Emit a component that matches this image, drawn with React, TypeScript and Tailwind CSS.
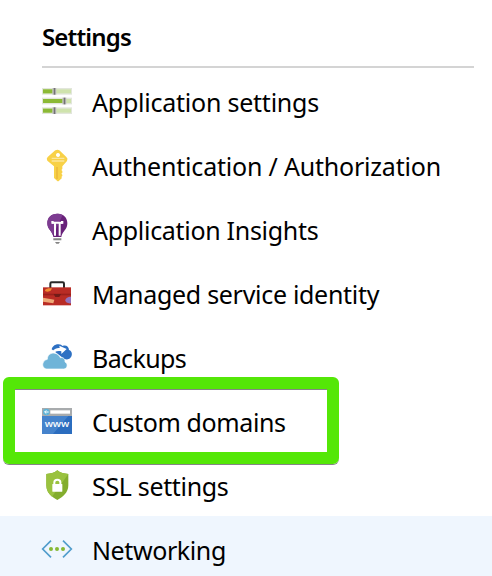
import type { ReactNode } from 'react';

const SlidersIcon = () => (
  <g>
    {[
      { y: 24, x: 55 },
      { y: 53, x: 85 },
      { y: 82, x: 55 },
    ].map(({ y, x }) => (
      <g key={y}>
        <rect x="18" y={y} width="90" height="20" fill="#e2e6dc" />
        <rect x="21" y={y + 4} width="84" height="12" fill="#cfe3ad" />
        <rect x="21" y={y + 4} width={x - 21} height="12" fill="#8bb935" />
        <rect x={x - 6} y={y} width="12" height="20" fill="#c8c8c8" />
        <rect x={x - 2} y={y} width="5" height="20" fill="#737373" />
      </g>
    ))}
  </g>
);

const KeyIcon = () => (
  <g>
    <path
      fillRule="evenodd"
      d="M61 18q5-2 9 1l21 20q6 5 2 12L79 67v8l-3 3 3 3v5l-3 3 3 3v4l-3 3 2 3-9 8q-3 3-6 0l-9-8V67L34 50q-4-6 1-11L56 20q2-2 5-2zm5 9a6 6 0 1 0 .1 0z"
      fill="#f8d147"
    />
    <path d="M47 43h38M47 51h38" stroke="#fbe69c" strokeWidth="4" />
    <path d="M63 69v36" stroke="#e9b438" strokeWidth="4" />
  </g>
);

const BulbIcon = () => (
  <g>
    <path d="M64 17c-19 0-30 12-30 28 0 14 7 19 12 27 4 6 5 10 6 15h24c1-7 3-11 7-16 6-8 11-13 11-26 0-16-11-28-30-28z" fill="#68217a" />
    <path d="M64 17c-19 0-30 12-30 28 0 14 7 19 12 27l5 10 29-61c-5-3-10-4-16-4z" fill="#7d3c91" />
    <path d="M57 83V45M71 83V45M48 44h32" fill="none" stroke="#fff" strokeWidth="6" />
    <path d="M46 39h7v8h-7zM75 39h7v8h-7z" fill="#fff" />
    <path d="M52 91h24v6H52zM57 102h15l-4 5h-7z" fill="#858585" />
  </g>
);

const ToolboxIcon = () => (
  <g>
    <path d="M43 48V35q0-4 4-4h33q4 0 4 4v13" fill="none" stroke="#282828" strokeWidth="6" />
    <rect x="21" y="46" width="84" height="54" fill="#b92c25" />
    <path d="M21 65h84v5H21z" fill="#9b201c" />
    <path d="M53 66h22l-5 9H58z" fill="#711c18" />
    <path d="M27 54c3-5 13-6 21-5-2 6-5 10-13 10-7 0-8-2-8-5z" fill="#f28b32" />
    <path d="M21 77l34 6-3 11-31-5z" fill="#eeaa77" />
    <path d="M105 74c-10 0-17 5-17 11s7 10 17 9z" fill="#9472bd" />
  </g>
);

const CloudIcon = () => (
  <g>
    <path d="M47 40c2-9 11-16 21-15 6 0 9 3 12 5 10-4 19 3 19 12 11 3 11 18 3 25-4 4-11 4-17 2z" fill="#2d70c3" />
    <path d="M49 46c8-9 15-11 22-10l-1-7 22 10-16 15v-8c-8-2-14-1-20 3z" fill="#fff" />
    <path d="M32 99c-15 0-17-25 2-29 0-13 11-21 23-18 8 1 13 7 16 13 10-2 15 5 14 13 10 4 8 21-4 21z" fill="#70b4d8" stroke="#fff" strokeWidth="2" />
  </g>
);

const DomainIcon = () => (
  <g>
    <rect x="18" y="24" width="90" height="78" fill="#2b6dbf" />
    <path d="M18 48h79l-46 54H18z" fill="#4583cc" />
    <rect x="18" y="24" width="90" height="24" fill="#a8abad" />
    <rect x="43" y="31" width="59" height="10" fill="#fff" />
    <circle cx="31" cy="36" r="10" fill="#5eb5d9" />
    <path d="M38 36H26m5-5-5 5 5 5" stroke="#fff" strokeWidth="3" fill="none" />
    <text x="26" y="81" textLength="74" lengthAdjust="spacingAndGlyphs" fontSize="29" fontWeight="500" fill="#fff">www</text>
  </g>
);

const ShieldIcon = () => (
  <g>
    <path d="M64 19c10 8 20 10 33 11v34c0 23-17 35-33 44-16-9-33-21-33-44V30c13-1 23-3 33-11z" fill="#83ad2d" />
    <path d="M64 19c10 8 20 10 33 11L48 98C37 89 31 79 31 64V30c13-1 23-3 33-11z" fill="#9ac23f" />
    <rect x="49" y="60" width="30" height="23" rx="1" fill="#fff" />
    <path d="M55 62V55c0-10 18-10 18 0v7" fill="none" stroke="#fff" strokeWidth="6" />
  </g>
);

const NetworkIcon = () => (
  <g>
    <path d="M45 38 20 63l25 25M81 38l25 25-25 25" fill="none" stroke="#519dcc" strokeWidth="5" />
    <g fill="#86b935">
      <circle cx="45" cy="63" r="6" />
      <circle cx="63" cy="63" r="6" />
      <circle cx="81" cy="63" r="6" />
    </g>
  </g>
);

const items: { label: string; icon: ReactNode; spacing: string; active?: boolean }[] = [
  { label: 'Application settings', icon: <SlidersIcon />, spacing: 'tracking-[-0.23px]' },
  { label: 'Authentication / Authorization', icon: <KeyIcon />, spacing: 'tracking-[-0.2px]' },
  { label: 'Application Insights', icon: <BulbIcon />, spacing: 'tracking-[-0.3px]' },
  { label: 'Managed service identity', icon: <ToolboxIcon />, spacing: 'tracking-[-0.3px]' },
  { label: 'Backups', icon: <CloudIcon />, spacing: 'tracking-[-0.6px]' },
  { label: 'Custom domains', icon: <DomainIcon />, spacing: 'tracking-[-0.38px]' },
  { label: 'SSL settings', icon: <ShieldIcon />, spacing: 'tracking-[-0.33px]' },
  { label: 'Networking', icon: <NetworkIcon />, spacing: 'tracking-[-0.4px]', active: true },
];

export default function App() {
  return (
    <main className="relative h-[576px] w-[492px] overflow-hidden bg-white font-['Noto_Sans',sans-serif] text-black">
      <header className="ml-[42px] h-[68px] w-[432px] border-b-2 border-[#d4d4d4] pt-5">
        <h1 className="text-[24px] leading-[34px] font-semibold tracking-[-0.85px]">Settings</h1>
      </header>
      <nav>
        {items.map(({ label, icon, spacing, active }) => (
          <a key={label} className={`flex h-16 items-center gap-3 pl-9 ${active ? 'bg-[#eff6fe]' : ''}`}>
            <svg viewBox="0 0 132 132" className="mt-1 size-11 shrink-0">{icon}</svg>
            <span className={`pt-1 text-[25px] leading-8 whitespace-nowrap ${spacing}`}>{label}</span>
          </a>
        ))}
      </nav>
      <div className="absolute top-[377px] left-[3px] h-[87px] w-[336px] rounded-[6px] border-12 border-[#54e707] shadow-[0_1px_0_#858585,inset_0_1px_0_#858585]" />
    </main>
  );
}
